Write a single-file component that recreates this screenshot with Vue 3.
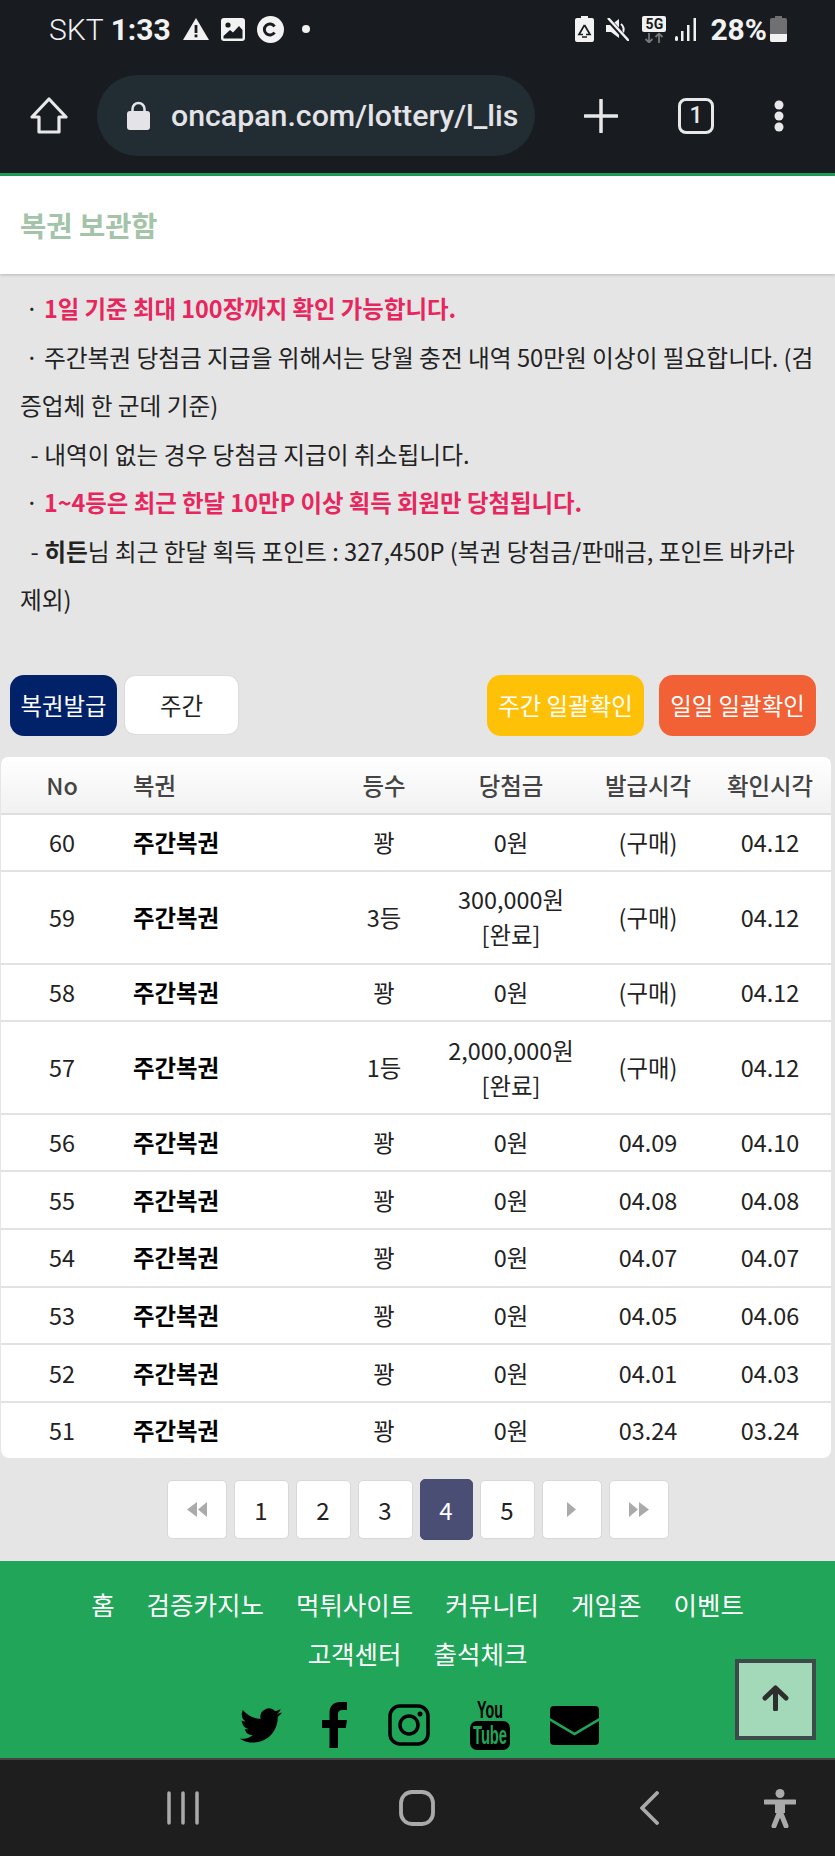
<template>
  <div class="page">
    <header class="chrome">
      <div class="status">
        <span class="carrier">SKT</span>
        <span class="clock">1:33</span>
        <svg class="st-warn" width="26" height="22" viewBox="0 0 26 22"><path d="M13 0 26 22H0Z" fill="#f2f2f2" /><rect x="11.6" y="7" width="2.8" height="8" fill="#181c20" /><rect x="11.6" y="16.5" width="2.8" height="2.8" fill="#181c20" /></svg>
        <svg class="st-pic" width="24" height="23" viewBox="0 0 24 23"><rect width="24" height="23" rx="3" fill="#f2f2f2" /><rect x="2.5" y="18" width="19" height="2.5" fill="#181c20" /><circle cx="7" cy="7" r="2.6" fill="#181c20" /><path d="M2.5 18 9 12l3 2.5L18 8l3.500 4v6Z" fill="#181c20" /></svg>
        <svg class="st-c" width="27" height="27" viewBox="0 0 27 27"><circle cx="13.500" cy="13.500" r="13.500" fill="#f2f2f2" /><path d="M17.500 10.500a5.500 5.500 0 1 0 0 6" fill="none" stroke="#181c20" stroke-width="3" /></svg>
        <i class="st-dot"></i>
        <div class="status-right">
          <svg width="19" height="26" viewBox="0 0 19 26"><path d="M6 0h7v2h4a2 2 0 0 1 2 2v20a2 2 0 0 1-2 2H2a2 2 0 0 1-2-2V4a2 2 0 0 1 2-2h4Z" fill="#f2f2f2" /><path d="M9.500 9 6 15l-2 3.500h4M9.500 9l3.500 6 2 3.500h-4M7 21h5" fill="none" stroke="#181c20" stroke-width="1.700" /></svg>
          <svg class="st-mute" width="23" height="23" viewBox="0 0 23 23"><path d="M0 7h5l8-6v19l-8-6H0Z" fill="#f2f2f2" /><path d="M15 6c3 2.500 3 6 2 9" stroke="#f2f2f2" stroke-width="2" fill="none" /><path d="M1 0 22 23" stroke="#181c20" stroke-width="5" /><path d="M2 0 23 23" stroke="#f2f2f2" stroke-width="2.500" /></svg>
          <div class="five-g">
            <span class="five-g-box">5G</span>
            <svg width="20" height="10" viewBox="0 0 20 10"><path d="M5 0v9M1.500 6 5 9.500 8.500 6M15 10V1M11.500 4 15 .5 18.500 4" fill="none" stroke="#777" stroke-width="1.800" /></svg>
          </div>
          <svg class="st-signal" width="22" height="23" viewBox="0 0 22 23"><rect x="0" y="18" width="3" height="5" rx="1.500" fill="#f2f2f2" /><rect x="6" y="13" width="2.500" height="10" fill="#f2f2f2" /><rect x="12" y="7" width="2.500" height="16" fill="#f2f2f2" /><rect x="18.500" y="0" width="2.500" height="23" fill="#f2f2f2" /></svg>
          <span class="percent">28%</span>
          <svg class="st-batt" width="17" height="26" viewBox="0 0 17 26"><path d="M5 0h7v2h3a2 2 0 0 1 2 2v20a2 2 0 0 1-2 2H2a2 2 0 0 1-2-2V4a2 2 0 0 1 2-2h3Z" fill="#707073" /><path d="M0 18h17v6a2 2 0 0 1-2 2H2a2 2 0 0 1-2-2Z" fill="#f2f2f2" /></svg>
        </div>
      </div>
      <div class="toolbar">
        <svg class="tb-home" width="38" height="38" viewBox="0 0 38 38"><path d="M19 2 36 20H29V35H9V20H2Z" fill="none" stroke="#e8e8e8" stroke-width="3.200" stroke-linejoin="round" /></svg>
        <div class="url">
          <svg width="23" height="29" viewBox="0 0 23 29"><path d="M5.500 12V8a6 6 0 0 1 12 0v4" fill="none" stroke="#e4e4e8" stroke-width="2.500" /><rect y="10" width="23" height="19" rx="3" fill="#e4e4e8" /></svg>
          <span>oncapan.com/lottery/l_lis</span>
        </div>
        <svg class="tb-plus" width="34" height="34" viewBox="0 0 34 34"><path d="M17 1v32M1 17h32" stroke="#e8e8e8" stroke-width="3.500" stroke-linecap="round" /></svg>
        <div class="tabs">1</div>
        <svg class="tb-more" width="10" height="32" viewBox="0 0 10 32"><circle cx="5" cy="5" r="4.500" fill="#e8e8e8" /><circle cx="5" cy="16" r="4.500" fill="#e8e8e8" /><circle cx="5" cy="27" r="4.500" fill="#e8e8e8" /></svg>
      </div>
    </header>

    <main class="content">
      <h1 class="title">복권 보관함</h1>

      <div class="notice">
        <p>&nbsp;· <b class="red">1일 기준 최대 100장까지 확인 가능합니다.</b></p>
        <p>&nbsp;· 주간복권 당첨금 지급을 위해서는 당월 충전 내역 50만원 이상이 필요합니다. (검증업체 한 군데 기준)</p>
        <p>&nbsp; - 내역이 없는 경우 당첨금 지급이 취소됩니다.</p>
        <p>&nbsp;· <b class="red">1~4등은 최근 한달 10만P 이상 획득 회원만 당첨됩니다.</b></p>
        <p>&nbsp; - <b>히든</b>님 최근 한달 획득 포인트 : 327,450P (복권 당첨금/판매금, 포인트 바카라 제외)</p>
      </div>

      <div class="actions">
        <button class="btn btn-navy">복권발급</button>
        <div class="select">주간</div>
        <button class="btn btn-yellow">주간 일괄확인</button>
        <button class="btn btn-orange">일일 일괄확인</button>
      </div>

      <div class="card">
        <table>
          <colgroup>
            <col style="width: 122px" />
            <col style="width: 210px" />
            <col style="width: 102px" />
            <col style="width: 152px" />
            <col style="width: 122px" />
            <col style="width: 122px" />
          </colgroup>
          <thead>
            <tr>
              <th>No</th>
              <th class="left">복권</th>
              <th>등수</th>
              <th>당첨금</th>
              <th>발급시각</th>
              <th>확인시각</th>
            </tr>
          </thead>
          <tbody>
            <tr v-for="row in rows" :key="row.no">
              <td>{{ row.no }}</td>
              <td class="left name">주간복권</td>
              <td>{{ row.rank }}</td>
              <td>{{ row.prize }}<template v-if="row.done"><br />[완료]</template></td>
              <td>{{ row.issued }}</td>
              <td>{{ row.checked }}</td>
            </tr>
          </tbody>
        </table>
      </div>

      <nav class="pager">
        <a class="page-btn wide"><svg width="20" height="15" viewBox="0 0 20 15"><path d="M10 0 0 7.500 10 15ZM20 0 11 7.500 20 15Z" fill="#aaa" /></svg></a>
        <a v-for="n in 5" :key="n" class="page-btn" :class="{ active: n === 4 }">{{ n }}</a>
        <a class="page-btn wide"><svg width="9" height="15" viewBox="0 0 9 15"><path d="M0 0 9 7.500 0 15Z" fill="#aaa" /></svg></a>
        <a class="page-btn wide"><svg width="20" height="15" viewBox="0 0 20 15"><path d="M0 0 9 7.500 0 15ZM10 0 20 7.500 10 15Z" fill="#aaa" /></svg></a>
      </nav>
    </main>

    <footer class="footer">
      <div class="links">
        <a v-for="link in links" :key="link">{{ link }}</a>
      </div>
      <div class="social">
        <svg width="42" height="35" viewBox="0 0 24 20"><path d="M23.953 2.570a10 10 0 0 1-2.825.775 4.958 4.958 0 0 0 2.163-2.723c-.951.555-2.005.959-3.127 1.184a4.920 4.920 0 0 0-8.384 4.482C7.690 6.095 4.067 4.130 1.640 1.162a4.822 4.822 0 0 0-.666 2.475c0 1.710.870 3.213 2.188 4.096a4.904 4.904 0 0 1-2.228-.616v.060a4.923 4.923 0 0 0 3.946 4.827 4.996 4.996 0 0 1-2.212.085 4.936 4.936 0 0 0 4.604 3.417 9.867 9.867 0 0 1-6.102 2.105c-.390 0-.779-.023-1.170-.067a13.995 13.995 0 0 0 7.557 2.209c9.053 0 13.998-7.496 13.998-13.985 0-.210 0-.420-.015-.630A9.935 9.935 0 0 0 24 2.590Z" fill="#000" /></svg>
        <svg width="26" height="46" viewBox="0 0 26 46"><path d="M7.500 46V26H0v-8h7.500v-7C7.500 3.500 12 0 18 0h7v8h-4.500C17.500 8 16 9.500 16 12v6h9l-1.200 8H16v20Z" fill="#000" /></svg>
        <svg width="42" height="42" viewBox="0 0 42 42"><rect x="2" y="2" width="38" height="38" rx="10" fill="none" stroke="#000" stroke-width="3.500" /><circle cx="21" cy="21" r="9" fill="none" stroke="#000" stroke-width="3.500" /><circle cx="32" cy="10" r="2.500" fill="#000" /></svg>
        <svg class="yt" width="40" height="50" viewBox="0 0 40 50"><text x="20" y="18" text-anchor="middle" class="yt-you" textLength="26" lengthAdjust="spacingAndGlyphs">You</text><rect y="21" width="40" height="29" rx="7" fill="#000" /><text x="20" y="44" text-anchor="middle" class="yt-tube" textLength="34" lengthAdjust="spacingAndGlyphs">Tube</text></svg>
        <svg width="49" height="39" viewBox="0 0 49 39"><path d="M4 0h41a4 4 0 0 1 4 4v8L24.500 26.500 0 12V4a4 4 0 0 1 4-4Z" fill="#000" /><path d="M0 15 24.500 29.500 49 15v20a4 4 0 0 1-4 4H4a4 4 0 0 1-4-4Z" fill="#000" /></svg>
      </div>
      <button class="to-top">
        <svg width="27" height="26" viewBox="0 0 27 26"><path d="M13.500 24V3M3 13 13.500 3 24 13" fill="none" stroke="#2e2e2e" stroke-width="5" stroke-linecap="round" stroke-linejoin="round" /></svg>
      </button>
    </footer>

    <div class="softkeys">
      <svg class="sk-recent" width="32" height="34" viewBox="0 0 32 34"><path d="M2 2v30M16 2v30M30 2v30" stroke="#aaa" stroke-width="3.500" stroke-linecap="round" /></svg>
      <svg class="sk-home" width="36" height="36" viewBox="0 0 36 36"><rect x="2" y="2" width="32" height="32" rx="11" fill="none" stroke="#aaa" stroke-width="3.800" /></svg>
      <svg class="sk-back" width="20" height="34" viewBox="0 0 20 34"><path d="M18 2 3 17l15 15" fill="none" stroke="#aaa" stroke-width="3.800" stroke-linecap="round" stroke-linejoin="round" /></svg>
      <svg class="sk-access" width="32" height="39" viewBox="0 0 32 39"><circle cx="16" cy="4.500" r="4.500" fill="#aaa" /><path d="M1 13h30M16 13v9M16 22l-6 15M16 22l6 15" fill="none" stroke="#aaa" stroke-width="5" stroke-linecap="round" /><rect x="11" y="12" width="10" height="12" fill="#aaa" /></svg>
    </div>
  </div>
</template>

<script setup>
const rows = [
  { no: 60, rank: "꽝", prize: "0원", issued: "(구매)", checked: "04.12" },
  { no: 59, rank: "3등", prize: "300,000원", done: true, issued: "(구매)", checked: "04.12" },
  { no: 58, rank: "꽝", prize: "0원", issued: "(구매)", checked: "04.12" },
  { no: 57, rank: "1등", prize: "2,000,000원", done: true, issued: "(구매)", checked: "04.12" },
  { no: 56, rank: "꽝", prize: "0원", issued: "04.09", checked: "04.10" },
  { no: 55, rank: "꽝", prize: "0원", issued: "04.08", checked: "04.08" },
  { no: 54, rank: "꽝", prize: "0원", issued: "04.07", checked: "04.07" },
  { no: 53, rank: "꽝", prize: "0원", issued: "04.05", checked: "04.06" },
  { no: 52, rank: "꽝", prize: "0원", issued: "04.01", checked: "04.03" },
  { no: 51, rank: "꽝", prize: "0원", issued: "03.24", checked: "03.24" },
];

const links = ["홈", "검증카지노", "먹튀사이트", "커뮤니티", "게임존", "이벤트", "고객센터", "출석체크"];
</script>

<style>
body {
  background: #e5e5e5;
}
</style>

<style scoped>
.page {
  position: relative;
  width: 835px;
  height: 1856px;
  overflow: hidden;
  display: flex;
  flex-direction: column;
  background: #e5e5e5;
  color: #222;
  font-family: "Noto Sans CJK KR", "Noto Sans", sans-serif;
  font-size: 23.4px;
}

.chrome {
  height: 173px;
  background: #181c20;
  border-bottom: 3px solid #1f9d58;
  box-sizing: content-box;
  color: #f2f2f2;
  font-family: Roboto, sans-serif;
}

.status {
  height: 58px;
  display: flex;
  align-items: center;
  padding: 0 48px 0 49px;
}

.carrier {
  font-size: 30px;
  font-weight: 300;
  margin-right: 7px;
}

.clock {
  font-size: 30px;
  font-weight: 700;
  margin-right: 12px;
}

.st-pic {
  margin-left: 12px;
}

.st-c {
  margin-left: 12px;
}

.st-dot {
  width: 8px;
  height: 8px;
  margin-left: 18px;
  border-radius: 50%;
  background: #f2f2f2;
}

.status-right {
  margin-left: auto;
  display: flex;
  align-items: center;
}

.st-mute {
  margin-left: 12px;
}

.five-g {
  margin-left: 13px;
  display: flex;
  flex-direction: column;
  align-items: center;
  gap: 1px;
}

.five-g-box {
  width: 24px;
  height: 16px;
  border-radius: 2px;
  background: #f2f2f2;
  color: #181c20;
  font-size: 14px;
  font-weight: 700;
  line-height: 16px;
  text-align: center;
}

.st-signal {
  margin-left: 9px;
}

.percent {
  margin-left: 13px;
  font-size: 30px;
  font-weight: 700;
}

.st-batt {
  margin-left: 3px;
}

.toolbar {
  height: 115px;
  display: flex;
  align-items: center;
  padding-bottom: 0;
}

.tb-home {
  margin-left: 30px;
}

.url {
  width: 438px;
  height: 81px;
  margin-left: 29px;
  padding-left: 30px;
  box-sizing: border-box;
  display: flex;
  align-items: center;
  gap: 21px;
  border-radius: 41px;
  background: #222c33;
  color: #e4e4e8;
  font-size: 30.3px;
  font-weight: 500;
  white-space: nowrap;
  overflow: hidden;
}

.tb-plus {
  margin-left: 49px;
}

.tabs {
  width: 36px;
  height: 36px;
  margin-left: 60px;
  box-sizing: border-box;
  border: 3px solid #e8e8e8;
  border-radius: 8px;
  color: #e8e8e8;
  font-size: 23px;
  font-weight: 500;
  line-height: 30px;
  text-align: center;
}

.tb-more {
  margin-left: 60px;
}

.content {
  flex: 1;
}

.title {
  height: 98px;
  margin: 0;
  padding-left: 20px;
  background: #fff;
  box-shadow: 0 1px 3px rgba(0, 0, 0, 0.2);
  color: #a3c4a8;
  font-size: 28.5px;
  font-weight: 700;
  line-height: 98px;
}

.notice {
  padding: 10px 20px 0 20px;
  font-size: 23.7px;
  line-height: 48.5px;
}

.notice p {
  margin: 0;
}

.red {
  color: #e8265e;
  font-size: 23.4px;
}

.actions {
  margin-top: 51px;
  padding: 0 19px 0 10px;
  display: flex;
  align-items: center;
}

.btn {
  height: 61px;
  border: 0;
  border-radius: 14px;
  color: #fff;
  font-family: inherit;
  font-size: 23.4px;
  padding: 0;
}

.btn-navy {
  width: 107px;
  background: #012169;
}

.select {
  width: 113px;
  height: 58px;
  margin-left: 8px;
  border-radius: 10px;
  background: #fff;
  box-shadow: 0 0 0 1px #dcdcdc;
  line-height: 58px;
  text-align: center;
}

.btn-yellow {
  width: 157px;
  margin-left: auto;
  background: #ffc107;
}

.btn-orange {
  width: 157px;
  margin-left: 15px;
  background: #f26035;
}

.card {
  width: 830px;
  margin: 21px 0 0 1px;
  border-radius: 8px;
  overflow: hidden;
  background: #fff;
}

table {
  width: 830px;
  table-layout: fixed;
  border-collapse: separate;
  border-spacing: 0;
}

th {
  height: 58px;
  padding: 0;
  border-bottom: 2px solid #dedede;
  background: linear-gradient(#fff, #f1f1f1);
  box-sizing: border-box;
  color: #444;
  font-weight: 500;
  text-align: center;
}

td {
  padding: 10.3px 0;
  border-bottom: 2px solid #e2e2e2;
  line-height: 35px;
  text-align: center;
}

tbody tr:last-child td {
  border-bottom: 0;
}

.left {
  padding-left: 10px;
  text-align: left;
}

.name {
  color: #000;
  font-weight: 700;
}

.pager {
  margin-top: 21px;
  display: flex;
  justify-content: center;
  align-items: center;
  gap: 7px;
}

.page-btn {
  width: 55px;
  height: 59px;
  box-sizing: border-box;
  display: flex;
  align-items: center;
  justify-content: center;
  border: 1px solid #d8d8d8;
  border-radius: 5px;
  background: #fff;
  font-size: 24px;
}

.page-btn.wide {
  width: 60px;
}

.page-btn.active {
  width: 53px;
  height: 61px;
  border-color: #4a4e74;
  background: #4a4e74;
  color: #fff;
}

.footer {
  position: relative;
  height: 197px;
  padding-top: 18px;
  box-sizing: border-box;
  background: #20a559;
  text-align: center;
}

.links {
  display: flex;
  flex-wrap: wrap;
  justify-content: center;
  column-gap: 32px;
  padding: 0 80px;
  color: #fff;
  font-size: 25.5px;
  line-height: 49px;
}

.social {
  margin-top: 23px;
  padding-left: 3px;
  display: flex;
  justify-content: center;
  align-items: center;
  gap: 40px;
  height: 50px;
}

.yt {
  overflow: visible;
}

.to-top {
  position: absolute;
  right: 19px;
  top: 98px;
  width: 81px;
  height: 81px;
  padding: 0;
  border: 4px solid #3c4a4a;
  background: #a3d9b9;
}

.yt-you,
.yt-tube {
  font-family: "Liberation Sans", sans-serif;
  font-weight: 700;
  font-size: 24px;
}

.yt-tube {
  fill: #20a559;
  font-size: 25px;
}

.softkeys {
  position: relative;
  height: 98px;
  background: #1e1e1e;
  border-top: 2px solid #444;
  box-sizing: border-box;
  display: flex;
  align-items: center;
}

.sk-recent {
  margin-left: 167px;
}

.sk-home {
  margin-left: 200px;
}

.sk-back {
  margin-left: 204px;
}

.sk-access {
  margin-left: 105px;
}
</style>
